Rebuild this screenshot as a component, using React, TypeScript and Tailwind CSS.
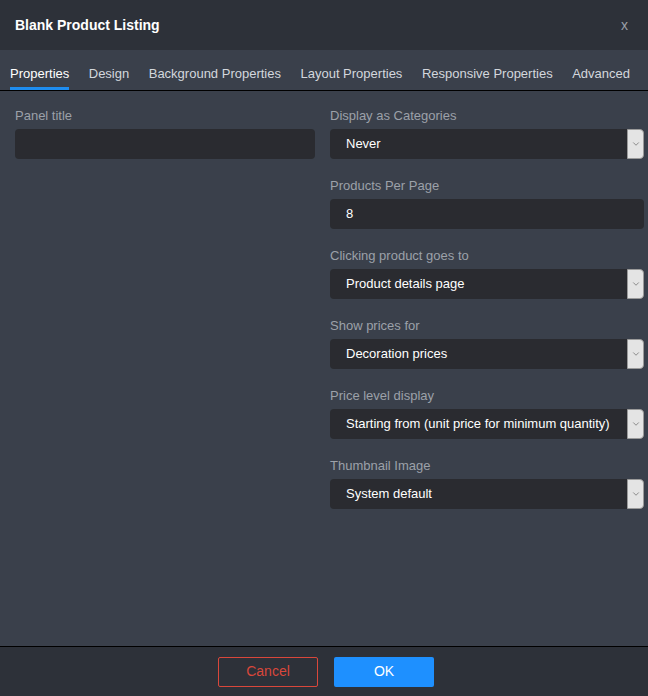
import { ChevronDown } from 'lucide-react';

const tabs = ['Properties', 'Design', 'Background Properties', 'Layout Properties', 'Responsive Properties', 'Advanced'];

interface Field {
  label: string;
  value: string;
  select?: boolean;
}

const rightFields: Field[] = [
  { label: 'Display as Categories', value: 'Never', select: true },
  { label: 'Products Per Page', value: '8' },
  { label: 'Clicking product goes to', value: 'Product details page', select: true },
  { label: 'Show prices for', value: 'Decoration prices', select: true },
  { label: 'Price level display', value: 'Starting from (unit price for minimum quantity)', select: true },
  { label: 'Thumbnail Image', value: 'System default', select: true },
];

function FieldRow({ field }: { field: Field }) {
  return (
    <div className="mb-[17px]">
      <div className="text-[13px] leading-[20px] h-[20px] text-[#9ca1a9]">{field.label}</div>
      <div className="relative mt-[3px] h-[30px] rounded-[4px] bg-[#2a2b30] flex items-center pl-[16px] text-[13px] text-white">
        {field.value}
        {field.select && (
          <div className="absolute right-0 top-0 h-[30px] w-[17px] rounded-r-[4px] bg-[#e4e4e4] border border-[#9a9a9a] flex items-center justify-center">
            <ChevronDown className="w-[10px] h-[10px] text-[#555]" strokeWidth={1.5} />
          </div>
        )}
      </div>
    </div>
  );
}

export default function App() {
  return (
    <div
      className="w-[648px] h-[696px] flex flex-col bg-[#3a404b]"
      style={{ fontFamily: '"Liberation Sans", Arial, sans-serif' }}
    >
      <header className="h-[50px] bg-[#2d3139] flex items-center justify-between pl-[15px] pr-[20px]">
        <h1 className="text-[14px] font-bold text-white">Blank Product Listing</h1>
        <button className="text-[14px] text-[#9a9fa7]">x</button>
      </header>

      <nav className="h-[41px] flex items-end gap-[19.5px] px-[10px] border-b border-black">
        {tabs.map((tab, i) => (
          <div
            key={tab}
            className={`h-[40px] flex items-center text-[13px] pt-[11px] border-b-[3px] ${
              i === 0 ? 'text-white border-[#1e8df0]' : 'text-[#d3d7dd] border-transparent'
            }`}
          >
            {tab}
          </div>
        ))}
      </nav>

      <div className="flex-1 flex gap-[15px] px-[15px] pt-[15px] pr-[4px]">
        <div className="w-[300px]">
          <FieldRow field={{ label: 'Panel title', value: '' }} />
        </div>
        <div className="flex-1">
          {rightFields.map(f => (
            <FieldRow key={f.label} field={f} />
          ))}
        </div>
      </div>

      <footer className="h-[50px] bg-[#2d3139] border-t border-black flex items-center justify-center gap-[16px] pl-[4px]">
        <button className="w-[100px] h-[30px] rounded-[2px] border border-[#d9473b] text-[#d9473b] text-[14px]">
          Cancel
        </button>
        <button className="w-[100px] h-[30px] rounded-[2px] bg-[#1e90ff] text-white text-[14px]">
          OK
        </button>
      </footer>
    </div>
  );
}
